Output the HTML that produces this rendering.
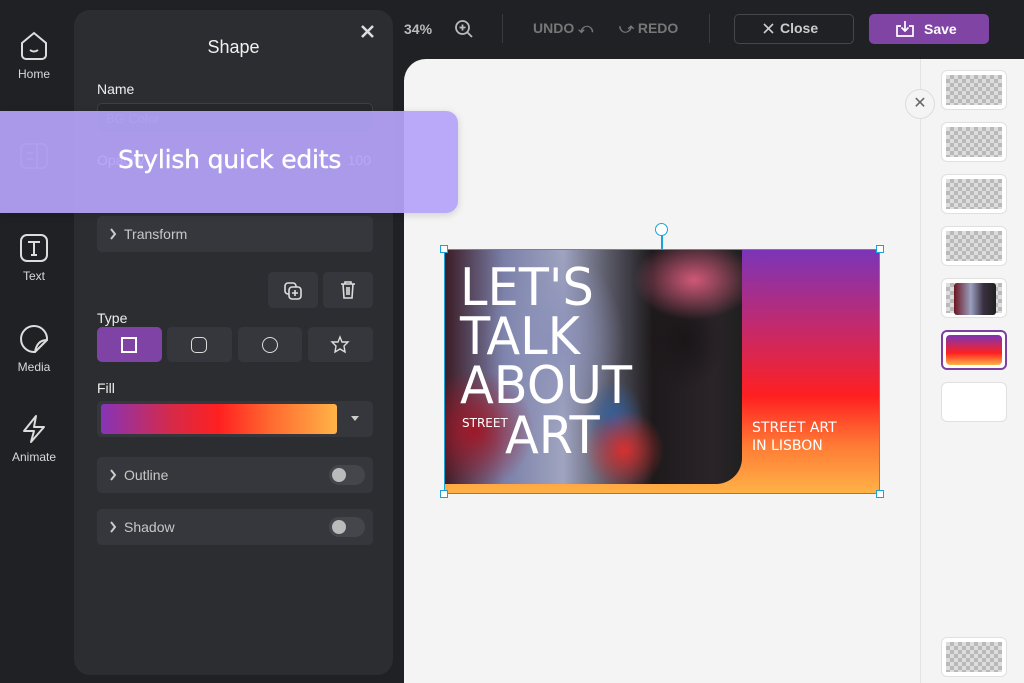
<!DOCTYPE html>
<html><head><meta charset="utf-8"><style>
*{margin:0;padding:0;box-sizing:border-box}
body{width:1024px;height:683px;overflow:hidden;background:#1f2125;font-family:"Liberation Sans",sans-serif;position:relative;color:#ddd}
.abs{position:absolute}
.rail{left:0;top:0;width:70px;text-align:center;font-size:12px;color:#d8d8d8}
.ri{position:absolute;left:0;width:68px;text-align:center}
.panel{left:74px;top:10px;width:319px;height:665px;background:#2c2d31;border-radius:16px}
.lbl{position:absolute;left:23px;font-size:14px;color:#eee}
.box{position:absolute;left:23px;width:276px;height:36px;background:#36373c;border-radius:5px;font-size:14px;color:#c8c8c8}
.box span{position:absolute;left:27px;top:10px}
.chev{position:absolute;left:12px;top:12px}
.tog{position:absolute;right:8px;top:8px;width:36px;height:20px;border-radius:10px;background:#45464b}
.tog:after{content:"";position:absolute;left:3px;top:3px;width:14px;height:14px;border-radius:7px;background:#bbb}
.tb{position:absolute;top:317px;height:35px;background:#36373c;border-radius:5px}
.canvas{left:404px;top:59px;width:620px;height:624px;background:#f4f4f4;border-top-left-radius:22px}
.th{position:absolute;left:941px;width:66px;height:40px;border:1px solid #e0e0e0;border-radius:6px;background:#fff;padding:4px}
.chk{width:100%;height:100%;background-color:#ddd;background-image:linear-gradient(45deg,#b9b9b9 25%,transparent 25%,transparent 75%,#b9b9b9 75%),linear-gradient(45deg,#b9b9b9 25%,transparent 25%,transparent 75%,#b9b9b9 75%);background-size:8px 8px;background-position:0 0,4px 4px}
.h{position:absolute;width:8px;height:8px;background:#fff;border:1.5px solid #1aa3d9}
.art{font-family:"DejaVu Sans","Liberation Sans",sans-serif;color:#fff;position:absolute;transform-origin:0 0}
</style></head><body>
<div class="abs rail">
 <div class="ri" style="top:30px"><svg width="32" height="32" viewBox="0 0 32 32" fill="none" stroke="#ddd" stroke-width="2"><path d="M4 13 L16 3 L28 13 V25 a4 4 0 0 1 -4 4 H8 a4 4 0 0 1 -4 -4 Z"/><path d="M12 20 q4 3 8 0"/></svg></div>
 <div class="ri" style="top:67px">Home</div>
 <div class="ri" style="top:141px"><svg width="32" height="30" viewBox="0 0 32 30" fill="none" stroke="#aaa" stroke-width="2" opacity=".5"><rect x="3" y="3" width="26" height="24" rx="5"/><path d="M19 3v24M9 12h6M9 18h6"/></svg></div>
 <div class="ri" style="top:232px"><svg width="32" height="32" viewBox="0 0 32 32" fill="none" stroke="#ddd" stroke-width="2"><rect x="3" y="3" width="26" height="26" rx="6"/><path d="M10 10h12M16 10v13M13 23h6"/></svg></div>
 <div class="ri" style="top:269px">Text</div>
 <div class="ri" style="top:323px"><svg width="32" height="32" viewBox="0 0 32 32" fill="none" stroke="#ddd" stroke-width="2"><path d="M29 17 A13 13 0 1 0 17 29 Z"/><path d="M29 17 Q19 17 17 29"/></svg></div>
 <div class="ri" style="top:360px">Media</div>
 <div class="ri" style="top:413px"><svg width="32" height="32" viewBox="0 0 32 32" fill="none" stroke="#ddd" stroke-width="2" stroke-linejoin="round"><path d="M18 3 L6 18 H16 L13 29 L26 14 H16 Z"/></svg></div>
 <div class="ri" style="top:450px">Animate</div>
</div>
<div class="abs panel">
 <div style="position:absolute;left:0;width:319px;top:27px;text-align:center;font-size:18px;color:#f0f0f0">Shape</div>
 <svg style="position:absolute;left:287px;top:15px" width="13" height="13" viewBox="0 0 13 13" stroke="#ddd" stroke-width="2.6"><path d="M1 1L12 12M12 1L1 12"/></svg>
 <div class="lbl" style="top:71px">Name</div>
 <div class="box" style="top:93px;height:30px;background:#26272b;border:1px solid #3d3e43"><span style="left:8px;top:7px;color:#777;font-size:13px">BG Color</span></div>
 <div class="lbl" style="top:142px">Opacity</div>
 <div style="position:absolute;right:22px;top:142px;font-size:14px">100</div>
 <div class="box" style="top:206px"><svg class="chev" width="8" height="12" viewBox="0 0 8 12" fill="none" stroke="#ccc" stroke-width="2"><path d="M2 1l4 5-4 5"/></svg><span>Transform</span></div>
 <div class="tb" style="left:194px;top:262px;width:50px;height:36px"><svg style="position:absolute;left:15px;top:9px" width="20" height="20" viewBox="0 0 20 20" fill="none" stroke="#ddd" stroke-width="1.6"><rect x="2" y="2" width="11" height="11" rx="3"/><rect x="6" y="6" width="12" height="12" rx="3" fill="#36373c"/><path d="M12 9v6M9 12h6"/></svg></div>
 <div class="tb" style="left:249px;top:262px;width:50px;height:36px"><svg style="position:absolute;left:16px;top:8px" width="18" height="20" viewBox="0 0 18 20" fill="none" stroke="#ddd" stroke-width="1.6"><path d="M2 4h14M6 4V2h6v2M4 4l1 14h8l1-14M8 7v8M10 7v8"/></svg></div>
 <div class="lbl" style="top:300px">Type</div>
 <div class="tb" style="left:23px;width:65px;background:#7f42a5"><div style="position:absolute;left:24px;top:10px;width:16px;height:16px;border:2px solid #fff"></div></div>
 <div class="tb" style="left:93px;width:65px"><div style="position:absolute;left:24px;top:10px;width:16px;height:16px;border:1.5px solid #ddd;border-radius:5px"></div></div>
 <div class="tb" style="left:164px;width:64px"><div style="position:absolute;left:24px;top:10px;width:16px;height:16px;border:1.5px solid #ddd;border-radius:50%"></div></div>
 <div class="tb" style="left:234px;width:65px"><svg style="position:absolute;left:22px;top:8px" width="20" height="20" viewBox="0 0 20 20" fill="none" stroke="#ddd" stroke-width="1.4"><path d="M10 2 L12 7 L18 7 L14 11 L15 17 L10 14 L5 17 L6 11 L2 7 L8 7 Z"/></svg></div>
 <div class="lbl" style="top:370px">Fill</div>
 <div class="box" style="top:391px"><div style="position:absolute;left:4px;top:3px;width:236px;height:30px;border-radius:3px;background:linear-gradient(90deg,#8634b8,#d62a48 30%,#ff2020 50%,#ff6a30 72%,#ffb347)"></div><div style="position:absolute;right:14px;top:15px;border:4px solid transparent;border-top:5px solid #ccc"></div></div>
 <div class="box" style="top:447px"><svg class="chev" width="8" height="12" viewBox="0 0 8 12" fill="none" stroke="#ccc" stroke-width="2"><path d="M2 1l4 5-4 5"/></svg><span>Outline</span><div class="tog"></div></div>
 <div class="box" style="top:499px"><svg class="chev" width="8" height="12" viewBox="0 0 8 12" fill="none" stroke="#ccc" stroke-width="2"><path d="M2 1l4 5-4 5"/></svg><span>Shadow</span><div class="tog"></div></div>
</div>
<div class="abs" style="left:404px;top:21px;font-size:14px;font-weight:bold;color:#bbb">34%</div>
<svg class="abs" style="left:454px;top:19px" width="20" height="20" viewBox="0 0 20 20" fill="none" stroke="#bbb" stroke-width="1.8"><circle cx="8.5" cy="8.5" r="6.5"/><path d="M13 13l5 5M8.5 5.5v6M5.5 8.5h6"/></svg>
<div class="abs" style="left:502px;top:14px;width:1px;height:29px;background:#3a3b40"></div>
<div class="abs" style="left:533px;top:20px;font-size:14px;font-weight:bold;color:#777">UNDO ⤺</div>
<div class="abs" style="left:619px;top:20px;font-size:14px;font-weight:bold;color:#777">⤻ REDO</div>
<div class="abs" style="left:709px;top:14px;width:1px;height:29px;background:#3a3b40"></div>
<div class="abs" style="left:734px;top:14px;width:120px;height:30px;border:1.5px solid #46474c;border-radius:5px;font-size:14px;font-weight:bold;color:#ccc;line-height:27px;padding-left:45px"><svg style="position:absolute;left:28px;top:8px" width="11" height="11" viewBox="0 0 11 11" stroke="#ccc" stroke-width="1.6"><path d="M1 1l9 9M10 1l-9 9"/></svg>Close</div>
<div class="abs" style="left:869px;top:14px;width:120px;height:30px;background:#8044a4;border-radius:5px;font-size:14px;font-weight:bold;color:#fff;line-height:30px;padding-left:55px"><svg style="position:absolute;left:26px;top:6px" width="20" height="18" viewBox="0 0 20 18" fill="none" stroke="#fff" stroke-width="1.7"><path d="M6 6H2v10h16V6h-4M10 1v10M6.5 7.5L10 11l3.5-3.5"/></svg>Save</div>
<div class="abs canvas"></div>
<div class="abs" style="left:920px;top:59px;width:1px;height:624px;background:#e3e3e3"></div>
<div class="abs" style="left:905px;top:89px;width:30px;height:30px;border-radius:50%;background:#f4f4f4;border:1px solid #ddd;text-align:center;line-height:28px;color:#666;font-size:16px">✕</div>
<div class="th" style="top:70px"><div class="chk"></div></div>
<div class="th" style="top:122px"><div class="chk"></div></div>
<div class="th" style="top:174px"><div class="chk"></div></div>
<div class="th" style="top:226px"><div class="chk"></div></div>
<div class="th" style="top:278px"><div class="chk" style="position:relative"><div style="position:absolute;left:8px;top:0;width:42px;height:32px;border-radius:3px;background:linear-gradient(90deg,#6a1520,#9aa0c0 40%,#3a3040 70%,#202020)"></div></div></div>
<div class="th" style="top:330px;border:2px solid #7d3fa1;padding:3px"><div style="width:100%;height:100%;border-radius:4px;background:linear-gradient(#7b35b8,#ff2020 60%,#ffb347)"></div></div>
<div class="th" style="top:382px"></div>
<div class="th" style="top:637px"><div class="chk"></div></div>
<div class="abs" style="left:444px;top:250px;width:436px;height:244px;background:linear-gradient(#7b35b8,#c02a70 30%,#ff2020 60%,#ff7a35 80%,#ffb347)"></div>
<div class="abs" style="left:444px;top:250px;width:298px;height:234px;border-bottom-right-radius:26px;overflow:hidden;background:
radial-gradient(ellipse 60px 40px at 250px 30px,#d05878,transparent),
radial-gradient(ellipse 40px 50px at 240px 90px,#1a1618,transparent),
radial-gradient(ellipse 40px 40px at 180px 200px,#d83030,transparent),
radial-gradient(ellipse 30px 40px at 170px 170px,#3060a0,transparent),
radial-gradient(ellipse 60px 60px at 30px 180px,#a01828,transparent),
radial-gradient(ellipse 70px 90px at 110px 90px,#8a90b8,transparent),
linear-gradient(90deg,#3a1a22 0%,#7a7fa8 20%,#a0a4c0 40%,#5a5a68 55%,#1e1a1c 70%,#2a2428 90%,#202020)"></div>
<div class="art" style="left:460px;top:264px;font-size:52px;line-height:49px;transform:scaleX(.95)">LET'S<br>TALK<br>ABOUT</div>
<div class="art" style="left:505px;top:411px;font-size:52px;line-height:50px;transform:scaleX(.95)">ART</div>
<div class="art" style="left:462px;top:416px;font-size:12px">STREET</div>
<div class="art" style="left:752px;top:419px;font-size:14px;line-height:18px">STREET ART<br>IN LISBON</div>
<div class="abs" style="left:444px;top:249px;width:436px;height:245px;border:1.5px solid #1aa3d9"></div>
<div class="abs" style="left:661px;top:235px;width:1.5px;height:14px;background:#1aa3d9"></div>
<div class="abs" style="left:655px;top:223px;width:13px;height:13px;border-radius:50%;border:1.5px solid #1aa3d9;background:#fff"></div>
<div class="h" style="left:440px;top:245px"></div><div class="h" style="left:876px;top:245px"></div>
<div class="h" style="left:440px;top:490px"></div><div class="h" style="left:876px;top:490px"></div>
<div class="abs" style="left:0;top:111px;width:458px;height:102px;background:rgba(180,162,248,.93);border-radius:0 12px 12px 0;box-shadow:0 2px 8px rgba(0,0,0,.15)"></div>
<div class="abs" style="left:118px;top:145px;font-size:25px;color:#fff;font-family:'DejaVu Sans','Liberation Sans',sans-serif;letter-spacing:-.2px;-webkit-text-stroke:.4px #fff">Stylish quick edits</div>
</body></html>
